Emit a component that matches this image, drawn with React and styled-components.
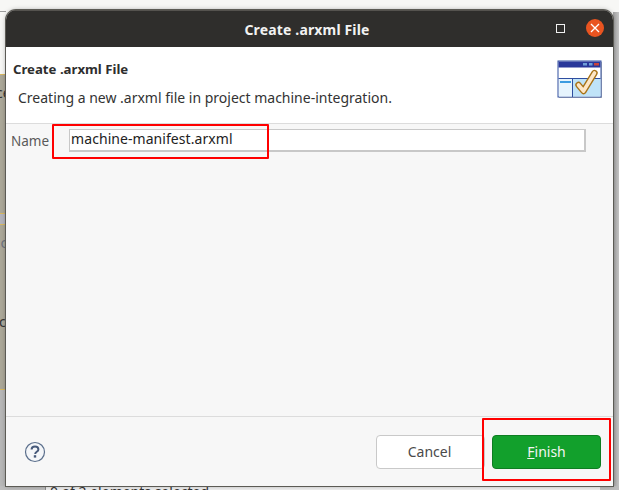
import styled, { createGlobalStyle } from "styled-components";

const GlobalStyle = createGlobalStyle`
  html, body {
    margin: 0;
    padding: 0;
  }
  body {
    font-family: "Noto Sans", "Open Sans", sans-serif;
    background: #fff;
  }
`;

const Desktop = styled.div`
  position: relative;
  box-sizing: border-box;
  width: 619px;
  height: 490px;
  overflow: hidden;
  padding: 10px 6px 4px 6px;
  background: #f7f7f5;
`;

// the window behind the dialog, only its edges show
const BehindLeft = styled.div`
  position: absolute;
  left: 0;
  top: 0;
  width: 6px;
  height: 490px;
  background: linear-gradient(
    to bottom,
    #f7f7f5 0 11px,
    #9c9c9c 11px 12px,
    #f7f7f5 12px 74px,
    #d8b860 74px 75px,
    #aca899 75px 213px,
    #d8b860 213px 214px,
    #b4b4bc 214px 224px,
    #d8b860 224px 225px,
    #aca899 225px 389px,
    #d8b860 389px 390px,
    #b8b8b8 390px 490px
  );
`;

const BehindRight = styled.div`
  position: absolute;
  right: 0;
  top: 12px;
  width: 6px;
  height: 478px;
  background: linear-gradient(to right, #a2a2a2, #c4c4c4);
`;

const BehindBottom = styled.div`
  position: absolute;
  left: 0;
  right: 0;
  bottom: 0;
  height: 4px;
  background: linear-gradient(
    to right,
    #bdbdbd 0 45px,
    #8c8c8c 45px 46px,
    #f0f0f0 46px 600px,
    #bdbdbd 600px 619px
  );
`;

const BehindText = styled.span`
  position: absolute;
  left: ${(p) => p.$left}px;
  top: ${(p) => p.$top}px;
  font-size: 14px;
  line-height: 16px;
  white-space: nowrap;
  color: ${(p) => p.$color || "#333"};
`;

const Window = styled.div`
  position: relative;
  display: flex;
  flex-direction: column;
  height: 100%;
  border-radius: 10px 10px 0 0;
  overflow: hidden;
  background: #f7f7f7;
  box-shadow: 0 0 0 1px #5c5b55, 0 0 5px rgba(0, 0, 0, 0.35);
`;

const TitleBar = styled.div`
  position: relative;
  flex: 0 0 36px;
  display: flex;
  align-items: center;
  justify-content: center;
  background: #2f2e2c;
  border-top: 1px solid #55534f;
  color: #f2f2f2;
  font-size: 14px;
  font-weight: 700;
  letter-spacing: 0.15px;
  padding-right: 5px;
`;

const WindowButtons = styled.div`
  position: absolute;
  right: 9px;
  top: 8px;
  display: flex;
  align-items: center;
  gap: 21px;
`;

const MaxButton = styled.div`
  width: 7px;
  height: 7px;
  border: 1px solid #f0f0f0;
`;

const CloseButton = styled.div`
  width: 18px;
  height: 18px;
  border-radius: 50%;
  background: #e95420;
  display: flex;
  align-items: center;
  justify-content: center;
`;

const Banner = styled.div`
  flex: 0 0 77px;
  box-sizing: border-box;
  display: flex;
  justify-content: space-between;
  padding: 13px 10px 0 7px;
  background: #fff;
  border-bottom: 1px solid #dcdcdc;
`;

const BannerTitle = styled.div`
  font-size: 13.2px;
  font-weight: 700;
  color: #2e2e2e;
`;

const BannerText = styled.div`
  margin: 10px 0 0 5px;
  font-size: 14px;
  color: #333;
`;

const Body = styled.div`
  flex: 1;
  padding: 5px 27px 0 5px;
`;

const NameRow = styled.label`
  display: flex;
  align-items: center;
  gap: 20px;
  font-size: 13.5px;
  color: #5a5a5a;
`;

const NameInput = styled.div`
  flex: 1;
  box-sizing: border-box;
  height: 23px;
  padding-left: 1px;
  background: #fff;
  border: 1px solid #c8c8c8;
  border-width: 1px 2px 2px 1px;
  font-size: 14px;
  letter-spacing: 0.06px;
  line-height: 18px;
  color: #222;
`;

const Highlight = styled.div`
  position: absolute;
  box-sizing: border-box;
  border: 2px solid #f00;
  border-radius: 1px;
  left: ${(p) => p.$left}px;
  top: ${(p) => p.$top}px;
  width: ${(p) => p.$width}px;
  height: ${(p) => p.$height}px;
  pointer-events: none;
`;

const Footer = styled.div`
  flex: 0 0 70px;
  box-sizing: border-box;
  display: flex;
  align-items: center;
  justify-content: space-between;
  padding: 0 12px 0 18px;
  border-top: 1px solid #dcdcdc;
  background: #f7f7f7;
`;

const FooterButtons = styled.div`
  display: flex;
  gap: 7px;
`;

const Button = styled.button`
  box-sizing: border-box;
  width: 109px;
  height: 34px;
  border-radius: 4px;
  border: 1px solid ${(p) => (p.$primary ? "#0e7d22" : "#c9c9c9")};
  background: ${(p) => (p.$primary ? "#12a02c" : "#fff")};
  color: ${(p) => (p.$primary ? "#f4f4f4" : "#4a4a4a")};
  font-family: inherit;
  font-size: 14px;
  padding: 0 ${(p) => (p.$primary ? 0 : 2)}px 0 0;
`;

const HelpIcon = () => (
  <svg width="22" height="22" viewBox="0 0 22 22">
    <circle cx="11" cy="11" r="9.5" fill="#f4f6f9" stroke="#5b6f8c" strokeWidth="1.2" />
    <path d="M7.6 8.6c0-2 1.5-3 3.4-3s3.4 1 3.4 2.8c0 2.4-3.2 2.4-3.2 4.6" fill="none" stroke="#46597a" strokeWidth="2" />
    <rect x="9.8" y="14.2" width="2.4" height="2.4" fill="#46597a" />
  </svg>
);

const WizardIcon = () => (
  <svg width="46" height="39" viewBox="0 0 46 39">
    <rect x="2" y="2" width="43" height="36" fill="#b9b9b9" />
    <rect x="1" y="1" width="43" height="36" fill="#fff" stroke="#2f4ea0" strokeWidth="1" />
    <rect x="1.5" y="1.5" width="42" height="6" fill="#28379a" />
    <rect x="26" y="3" width="4" height="2.5" fill="#6f9fd8" />
    <rect x="32" y="3" width="3.5" height="2.5" fill="#6f9fd8" />
    <rect x="37" y="3" width="5" height="2.5" fill="#c8433c" />
    <path d="M1.5 18.5H43.5" stroke="#2f4ea0" />
    <rect x="2" y="19" width="13.5" height="17.5" fill="#e6f4fd" />
    <rect x="16" y="19" width="27.5" height="17.5" fill="#bfe3f8" />
    <path d="M15.5 18.5V37" stroke="#2f4ea0" />
    <rect x="3" y="21" width="11" height="2" fill="#3a9be0" />
    <path d="M21.5 25L26.5 31L37.5 13" fill="none" stroke="#a87318" strokeWidth="6.4" strokeLinecap="round" strokeLinejoin="round" />
    <path d="M21.5 25L26.5 31L37.5 13" fill="none" stroke="#fde6c6" strokeWidth="3.6" strokeLinecap="round" strokeLinejoin="round" />
  </svg>
);

const CloseIcon = () => (
  <svg width="10" height="10" viewBox="0 0 10 10">
    <path d="M1 1L9 9M9 1L1 9" stroke="#fff" strokeWidth="1.3" />
  </svg>
);

export default function App() {
  return (
    <>
      <GlobalStyle />
      <Desktop>
        <BehindLeft />
        <BehindRight />
        <BehindBottom />
        <BehindText $left={-4} $top={85}>ce</BehindText>
        <BehindText $left={-3} $top={235} $color="#6f7480">ic</BehindText>
        <BehindText $left={-1} $top={314}>c</BehindText>
        <BehindText $left={50} $top={484}>0 of 2 elements selected</BehindText>
        <Window>
          <TitleBar>
            Create .arxml File
            <WindowButtons>
              <MaxButton />
              <CloseButton>
                <CloseIcon />
              </CloseButton>
            </WindowButtons>
          </TitleBar>
          <Banner>
            <div>
              <BannerTitle>Create .arxml File</BannerTitle>
              <BannerText>Creating a new .arxml file in project machine-integration.</BannerText>
            </div>
            <WizardIcon />
          </Banner>
          <Body>
            <NameRow>
              Name
              <NameInput>machine-manifest.arxml</NameInput>
            </NameRow>
          </Body>
          <Footer>
            <HelpIcon />
            <FooterButtons>
              <Button>Cancel</Button>
              <Button $primary>
                <u>F</u>inish
              </Button>
            </FooterButtons>
          </Footer>
        </Window>
        <Highlight $left={52} $top={124} $width={217} $height={35} />
        <Highlight $left={482} $top={418} $width={129} $height={63} />
      </Desktop>
    </>
  );
}
